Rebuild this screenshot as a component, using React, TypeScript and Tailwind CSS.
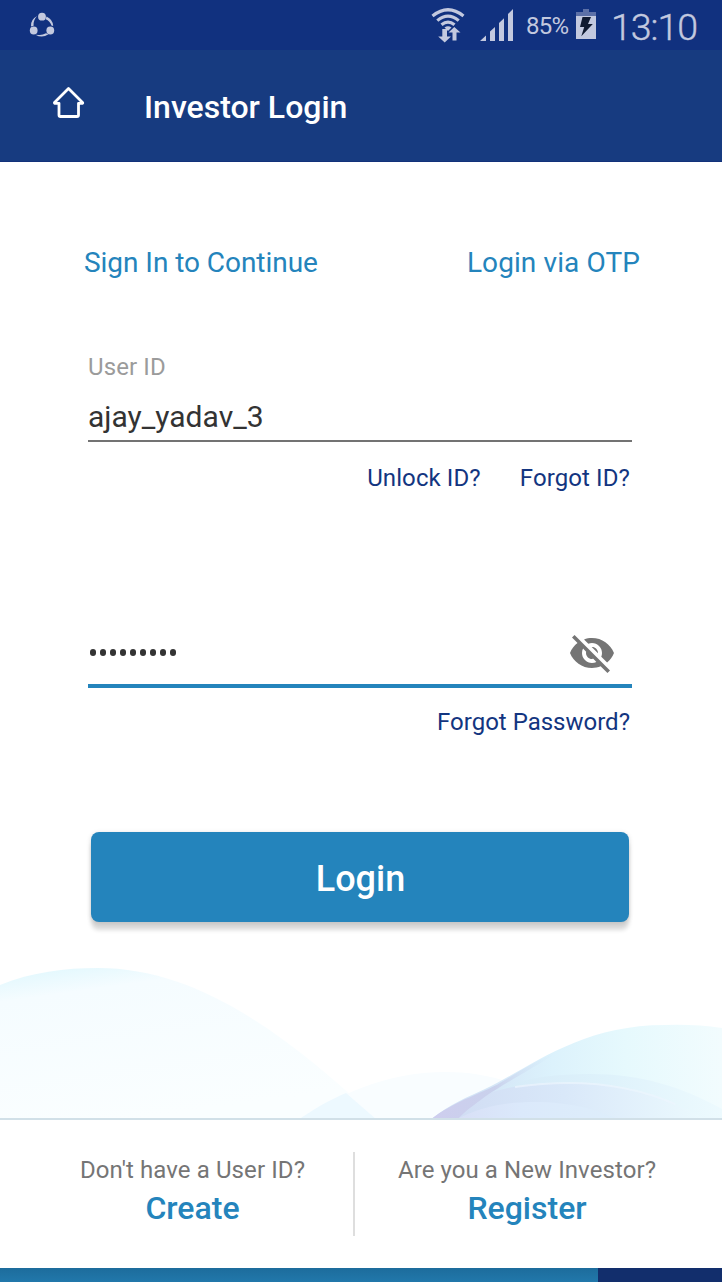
import React from "react";

function StatusBar() {
  return (
    <div className="flex h-[50px] items-start bg-[#11317f] text-[#c3c9df]">
      <svg className="mt-[12px] ml-[29px] h-[26px] w-[26px]" viewBox="0 0 26 26" fill="currentColor">
        <circle cx="13" cy="4.7" r="3.9" />
        <circle cx="4.7" cy="18.5" r="3.9" />
        <circle cx="21.3" cy="18.5" r="3.9" />
        <path d="M8.2 4Q1.3 7.600 2 14.500L4.600 13.800Q4 8 8.200 4Z" />
        <path d="M17.500 4.600Q23.800 7.500 24.200 14L22.500 13.600Q21 8.800 16.700 7.200Z" />
        <path d="M6.500 22.700Q13 26.700 19.500 22.300L17 21.300Q13 23.500 9.500 23Z" />
      </svg>
      <svg className="ml-[376px] mt-[6px] h-[38px] w-[36px]" viewBox="0 0 36 38" fill="none" stroke="currentColor">
        <path d="M1.500 10Q17 -2.500 32.500 10" strokeWidth="3.200" />
        <path d="M6.300 14.600Q17 5.500 27.700 14.600" strokeWidth="3.200" />
        <path d="M10.500 18.800Q17 13.500 23.500 18.800" strokeWidth="3.200" />
        <path d="M13.500 21.500Q17 19 20.500 21.500L17 25Z" fill="currentColor" stroke="none" />
        <path d="M11.300 23h4.700v7.500h4l-6.300 6-6.500-6h4.100Z M21.500 34.500v-8h-4l5.800-5.500 6.200 5.500h-4v8Z" fill="currentColor" stroke="none" />
      </svg>
      <svg className="ml-[13px] mt-[9px] h-[32px] w-[34px]" viewBox="0 0 34 32" fill="currentColor">
        <path d="M0 32L6 26.500V32Z M10 22.500L15 18V32h-5Z M19 14L24 9.200V32h-5Z M28 5L33 0V32h-5Z" />
      </svg>
      <span className="ml-[12px] mt-[10px] w-[50px] text-[24px] leading-[32px] tracking-[-0.7px]">85%</span>
      <svg className="mt-[9px] h-[30px] w-[20px]" viewBox="0 0 20 30">
        <path d="M7 0h6v3h7v4H0V3h7Z" fill="#5c70a7" />
        <path d="M0 7h20v23H0Z" fill="#c3c9df" />
        <path d="M6.500 8H15L12 15h4.800L5.300 27.200 8.200 18H4Z" fill="#101a30" />
      </svg>
      <span className="ml-[15px] mt-[4px] text-[37.500px] font-light leading-[46px] tracking-[-1px] [-webkit-text-stroke:0.4px_#c3c9df]">13:10</span>
    </div>
  );
}

function Waves() {
  return (
    <svg className="absolute bottom-0 left-0 h-[160px] w-[722px]" viewBox="0 960 722 160">
      <defs>
        <linearGradient id="left" x1="0" y1="0" x2="0.35" y2="1">
          <stop offset="0" stopColor="#def7fd" />
          <stop offset=".2" stopColor="#f5fcff" />
          <stop offset="1" stopColor="#fafeff" />
        </linearGradient>
        <linearGradient id="right" gradientUnits="userSpaceOnUse" x1="480" y1="0" x2="722" y2="0">
          <stop offset="0" stopColor="#d3e4f6" />
          <stop offset=".3" stopColor="#dcf2fc" />
          <stop offset=".6" stopColor="#e6f9fd" />
          <stop offset="1" stopColor="#f2fcfe" />
        </linearGradient>
        <linearGradient id="inner" x1="0" x2="1">
          <stop offset="0" stopColor="#d0dcf3" />
          <stop offset=".45" stopColor="#d9e8f9" />
          <stop offset="1" stopColor="#ecfafe" />
        </linearGradient>
        <linearGradient id="outer" x1="0" x2="1">
          <stop offset="0" stopColor="#d3e8f7" />
          <stop offset=".55" stopColor="#def2fb" />
          <stop offset="1" stopColor="#edfafe" />
        </linearGradient>
        <linearGradient id="crest" x1="0" x2="1">
          <stop offset="0" stopColor="#cecdee" />
          <stop offset=".5" stopColor="#c9d1ec" />
          <stop offset="1" stopColor="#d6effb" stopOpacity="0" />
        </linearGradient>
        <linearGradient id="base" x1="0" x2="1">
          <stop offset="0" stopColor="#d8dff6" />
          <stop offset=".4" stopColor="#dbe9fb" />
          <stop offset="1" stopColor="#deeefb" />
        </linearGradient>
      </defs>
      <path d="M0 985C32 972 65 968 98 968C195 968 282 1030 378 1120H0Z" fill="url(#left)" />
      <path d="M298 1120C350 1088 395 1072 445 1072C490 1072 535 1085 570 1120Z" fill="#f9fdff" />
      <path d="M298 1120C314 1109 329 1100 346 1093L377 1120Z" fill="#edf9ff" />
      <path d="M430 1120C450 1104 468 1097 485 1089C530 1068 579 1025 665 1025Q695 1024 722 1028V1120Z" fill="url(#right)" />
      <path d="M465 1120C492 1084 530 1074 590 1074C640 1074 680 1086 722 1109V1120Z" fill="url(#outer)" />
      <path d="M446 1120C475 1092 510 1083 565 1083C620 1083 664 1096 708 1120Z" fill="url(#inner)" />
      <path d="M515 1087C570 1079 625 1082 675 1104" fill="none" stroke="#edf5fd" strokeWidth="2" opacity=".7" />
      <path d="M430 1120C455 1100 485 1093 505 1080C525 1068 540 1059 560 1051C530 1070 505 1083 486 1096C474 1105 465 1111 457 1120Z" fill="url(#crest)" />
      <path d="M455 1120C480 1107 505 1102 535 1102C570 1102 600 1110 620 1120Z" fill="url(#base)" />
    </svg>
  );
}

export default function App() {
  return (
    <div className="flex h-[1282px] w-[722px] flex-col overflow-hidden bg-white font-[Roboto,sans-serif]">
      <StatusBar />
      <header className="flex h-[112px] items-start border-b border-[#12317a] bg-[#173b80] text-white">
        <svg className="ml-[52px] mt-[36px] h-[34px] w-[34px]" viewBox="0 0 34 34" fill="none" stroke="currentColor" strokeWidth="2.800" strokeLinejoin="round">
          <path d="M16.500 2.500L2.500 16.500Q2 17.300 3.500 17.300H7V29Q7 30.500 8.500 30.500H25Q26.500 30.500 26.500 29V17.300H29.500Q31.300 17.300 30.500 16.500Z" />
        </svg>
        <h1 className="ml-[58px] mt-[37px] text-[32px] font-medium leading-[40px]">Investor Login</h1>
      </header>

      <main className="relative flex h-[958px] shrink-0 flex-col">
        <Waves />
        <div className="relative mt-[83px] flex h-[36px] justify-between pl-[84px] pr-[82px] text-[28px] leading-[36px] text-[#2484bc]">
          <a className="tracking-[-0.05px]">Sign In to Continue</a>
          <a className="tracking-[0.1px]">Login via OTP</a>
        </div>
        <section className="relative ml-[88px] mt-[71px] w-[544px]">
          <label className="block h-[30px] text-[24px] leading-[30px] tracking-[0.1px] text-[#9b9b9b]">User ID</label>
          <div className="mt-[12px] h-[48px] border-b-2 border-[#737373] text-[30px] leading-[46px] text-[#333]">ajay_yadav_3</div>
          <div className="mt-[20px] flex h-[32px] justify-end gap-[39px] pr-[2px] text-[24px] leading-[32px] tracking-[0.1px] text-[#133580]">
            <a>Unlock ID?</a>
            <a>Forgot ID?</a>
          </div>
          <div className="mt-[134px] flex h-[60px] items-start justify-between border-b-4 border-[#2484bc] pl-[2px]">
            <div className="mt-[21px] flex gap-[4px]">
              {Array.from({ length: 9 }, (_, i) => (
                <span key={i} className="h-[7px] w-[6px] rounded-full bg-[#333]" />
              ))}
            </div>
            <svg className="mr-[16px] mt-px h-[48px] w-[48px]" viewBox="0 0 24 24" fill="#757575">
              <path d="M12 7c2.760 0 5 2.240 5 5 0 .650-.130 1.260-.360 1.830l2.920 2.920c1.510-1.260 2.700-2.890 3.430-4.750-1.730-4.390-6-7.500-11-7.500-1.400 0-2.740.250-3.980.700l2.160 2.160C10.740 7.130 11.350 7 12 7zM2 4.270l2.280 2.280.460.460C3.080 8.300 1.780 10.020 1 12c1.730 4.390 6 7.500 11 7.500 1.550 0 3.030-.300 4.380-.840l.420.420L19.730 22 21 20.730 3.270 3 2 4.270zM7.530 9.800l1.550 1.550c-.050.210-.080.430-.080.650 0 1.660 1.340 3 3 3 .220 0 .440-.030.650-.080l1.550 1.550c-.670.330-1.410.530-2.200.530-2.760 0-5-2.240-5-5 0-.790.200-1.530.530-2.200zm4.310-.780l3.150 3.150.020-.160c0-1.660-1.340-3-3-3l-.170.010z" />
            </svg>
          </div>
          <div className="mt-[18px] h-[32px] pr-[2px] text-right text-[24px] leading-[32px] text-[#133580]">Forgot Password?</div>
          <button className="ml-[3px] mt-[94px] flex h-[90px] w-[538px] items-center justify-center rounded-[8px] bg-[#2484bc] pt-[4px] pl-px text-[36px] font-medium text-white shadow-[0_8px_4px_rgba(0,0,0,0.15),0_1px_5px_rgba(0,0,0,0.14)]">Login</button>
        </section>
        <div className="absolute bottom-0 h-[2px] w-full bg-[#d1e0e8]" />
      </main>

      <footer className="flex h-[148px] shrink-0 rounded-[4px] bg-white pt-[32px] text-center text-[24px] text-[#757575]">
        <div className="h-[84px] w-[355px] border-r-2 border-[#dedede] pl-[32px]">
          <p className="mt-[2px] leading-[32px] tracking-[0.1px]">Don't have a User ID?</p>
          <a className="mt-[2px] block text-[32px] font-medium leading-[40px] text-[#2484bc]">Create</a>
        </div>
        <div className="w-[344px]">
          <p className="mt-[2px] leading-[32px] tracking-[0.08px]">Are you a New Investor?</p>
          <a className="mt-[2px] block text-[32px] font-medium leading-[40px] text-[#2484bc]">Register</a>
        </div>
      </footer>
      <div className="flex h-[14px] shrink-0">
        <div className="w-[598px] bg-gradient-to-b from-[#1d6c9c] to-[#2178ab]" />
        <div className="grow bg-[#122e6c]" />
      </div>
    </div>
  );
}
